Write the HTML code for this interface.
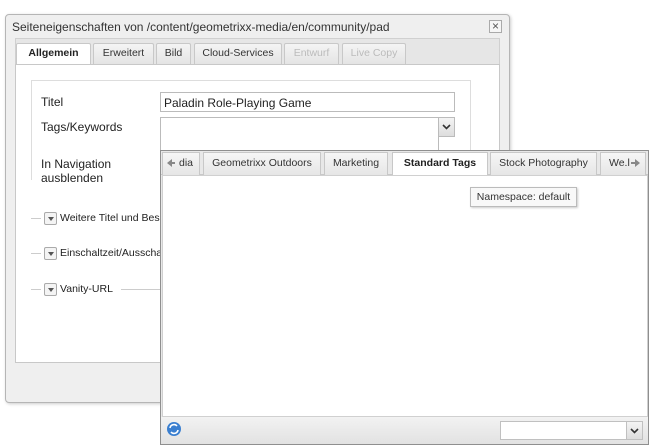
<!DOCTYPE html>
<html><head><style>
*{box-sizing:border-box;margin:0;padding:0}
body{width:662px;height:445px;background:#fff;position:relative;overflow:hidden;font-family:"Liberation Sans",sans-serif;font-size:10.5px;color:#222}
.a{position:absolute}
.tab{position:absolute;top:43px;height:21px;border:1px solid #c8c8c8;border-bottom:none;background:linear-gradient(#f4f4f4,#e4e4e4);text-align:center;line-height:19px;color:#333;border-radius:2px 2px 0 0}
.ptab{position:absolute;top:152px;height:23px;border:1px solid #c8c8c8;border-bottom:none;background:linear-gradient(#f6f6f6,#e6e6e6);text-align:center;line-height:21px;color:#333}
.cb{position:absolute;left:44px;width:13px;height:13px;border:1px solid #aaa;border-radius:2px;background:#f4f4f4}
.cb:after{content:"";position:absolute;left:3px;top:4px;border:3px solid transparent;border-top:4px solid #555}
.line{position:absolute;height:1px;background:#ccc}
.arl{position:absolute;width:0;height:0;border:4px solid transparent;border-right:5px solid #888}
.arr{position:absolute;width:0;height:0;border:4px solid transparent;border-left:5px solid #888}
</style></head><body>
<div class="a" style="left:5px;top:14px;width:505px;height:389px;background:#efefef;border:1px solid #b5b5b5;border-radius:4px;box-shadow:1px 1px 3px #ccc"></div>
<div class="a" style="left:12px;top:20px;font-size:12px;color:#333">Seiteneigenschaften von /content/geometrixx-media/en/community/pad</div>
<div class="a" style="left:489px;top:20px;width:13px;height:13px;border:1px solid #aaa;background:#f6f6f6;font-size:12px;line-height:10px;text-align:center;color:#555">×</div>
<div class="a" style="left:15px;top:38px;width:485px;height:27px;background:#e6e6e6;border:1px solid #d0d0d0"></div>
<div class="tab" style="left:16px;width:75px;background:#fff;font-weight:bold;height:23px;color:#222">Allgemein</div>
<div class="tab" style="left:93px;width:61px">Erweitert</div>
<div class="tab" style="left:156px;width:35px">Bild</div>
<div class="tab" style="left:194px;width:88px">Cloud-Services</div>
<div class="tab" style="left:284px;width:55px;color:#bbb">Entwurf</div>
<div class="tab" style="left:342px;width:64px;color:#bbb">Live Copy</div>
<div class="a" style="left:15px;top:64px;width:485px;height:299px;background:#fff;border:1px solid #c8c8c8"></div>
<div class="a" style="left:31px;top:80px;width:440px;height:100px;border:1px solid #ddd;border-bottom:none"></div>
<div class="a" style="left:41px;top:95px;font-size:12px">Titel</div>
<div class="a" style="left:160px;top:92px;width:295px;height:20px;border:1px solid #bbb;padding:3px 3px;font-size:12px">Paladin Role-Playing Game</div>
<div class="a" style="left:41px;top:120px;font-size:12px">Tags/Keywords</div>
<div class="a" style="left:160px;top:117px;width:279px;height:36px;border:1px solid #bbb;background:#fff"></div>
<div class="a" style="left:438px;top:117px;width:17px;height:20px;border:1px solid #bbb;background:linear-gradient(#f4f4f4,#ddd)"><svg width="15" height="18"><path d="M4 7l3.5 3.5L11 7" stroke="#333" stroke-width="1.6" fill="none"/></svg></div>
<div class="a" style="left:41px;top:157px;font-size:12px;line-height:14px">In Navigation<br>ausblenden</div>
<div class="line" style="left:31px;top:218px;width:10px"></div><div class="cb" style="top:212px"></div><div class="a" style="left:60px;top:212px">Weitere Titel und Bes</div>
<div class="line" style="left:31px;top:253px;width:10px"></div><div class="cb" style="top:247px"></div><div class="a" style="left:60px;top:247px">Einschaltzeit/Ausscha</div>
<div class="line" style="left:31px;top:289px;width:10px"></div><div class="cb" style="top:283px"></div><div class="a" style="left:60px;top:283px">Vanity-URL</div>
<div class="line" style="left:121px;top:289px;width:40px"></div>
<div class="a" style="left:160px;top:150px;width:489px;height:295px;background:#e8e8e8;border:1px solid #8f8f8f"></div>
<div class="a" style="left:161px;top:174px;width:487px;height:1px;background:#c8c8c8"></div>
<div class="ptab" style="left:162px;width:38px;text-align:left;padding-left:16px">dia</div>
<div class="arl" style="left:163px;top:159px"></div><div class="a" style="left:171px;top:162px;width:4px;height:2px;background:#888"></div>
<div class="ptab" style="left:203px;width:118px">Geometrixx Outdoors</div>
<div class="ptab" style="left:324px;width:64px">Marketing</div>
<div class="ptab" style="left:392px;width:96px;background:#fff;font-weight:bold;height:24px;color:#222">Standard Tags</div>
<div class="ptab" style="left:490px;width:107px">Stock Photography</div>
<div class="ptab" style="left:600px;width:46px;text-align:left;padding-left:8px">We.l</div>
<div class="a" style="left:631px;top:162px;width:4px;height:2px;background:#888"></div><div class="arr" style="left:635px;top:159px"></div>
<div class="a" style="left:162px;top:175px;width:486px;height:242px;background:#fff;border:1px solid #d0d0d0"></div>
<div class="a" style="left:470px;top:187px;width:107px;height:20px;border:1px solid #bbb;background:#f8f8f8;line-height:18px;text-align:center;box-shadow:1px 1px 2px #ccc;color:#333">Namespace: default</div>
<div class="a" style="left:161px;top:417px;width:487px;height:27px;background:linear-gradient(#f2f2f2,#e2e2e2)"></div>
<svg class="a" style="left:166px;top:421px" width="16" height="16" viewBox="0 0 16 16"><circle cx="8" cy="8" r="7" fill="#3a7fd0"/><path d="M4 7a4 4 0 0 1 7-2M12 9a4 4 0 0 1-7 2" stroke="#fff" stroke-width="1.6" fill="none"/></svg>
<div class="a" style="left:500px;top:421px;width:127px;height:19px;border:1px solid #c0c0c0;background:#fff"></div>
<div class="a" style="left:626px;top:421px;width:17px;height:19px;border:1px solid #c0c0c0;background:linear-gradient(#f4f4f4,#ddd)"><svg width="15" height="17"><path d="M4 7l3.5 3.5L11 7" stroke="#333" stroke-width="1.6" fill="none"/></svg></div>
</body></html>
